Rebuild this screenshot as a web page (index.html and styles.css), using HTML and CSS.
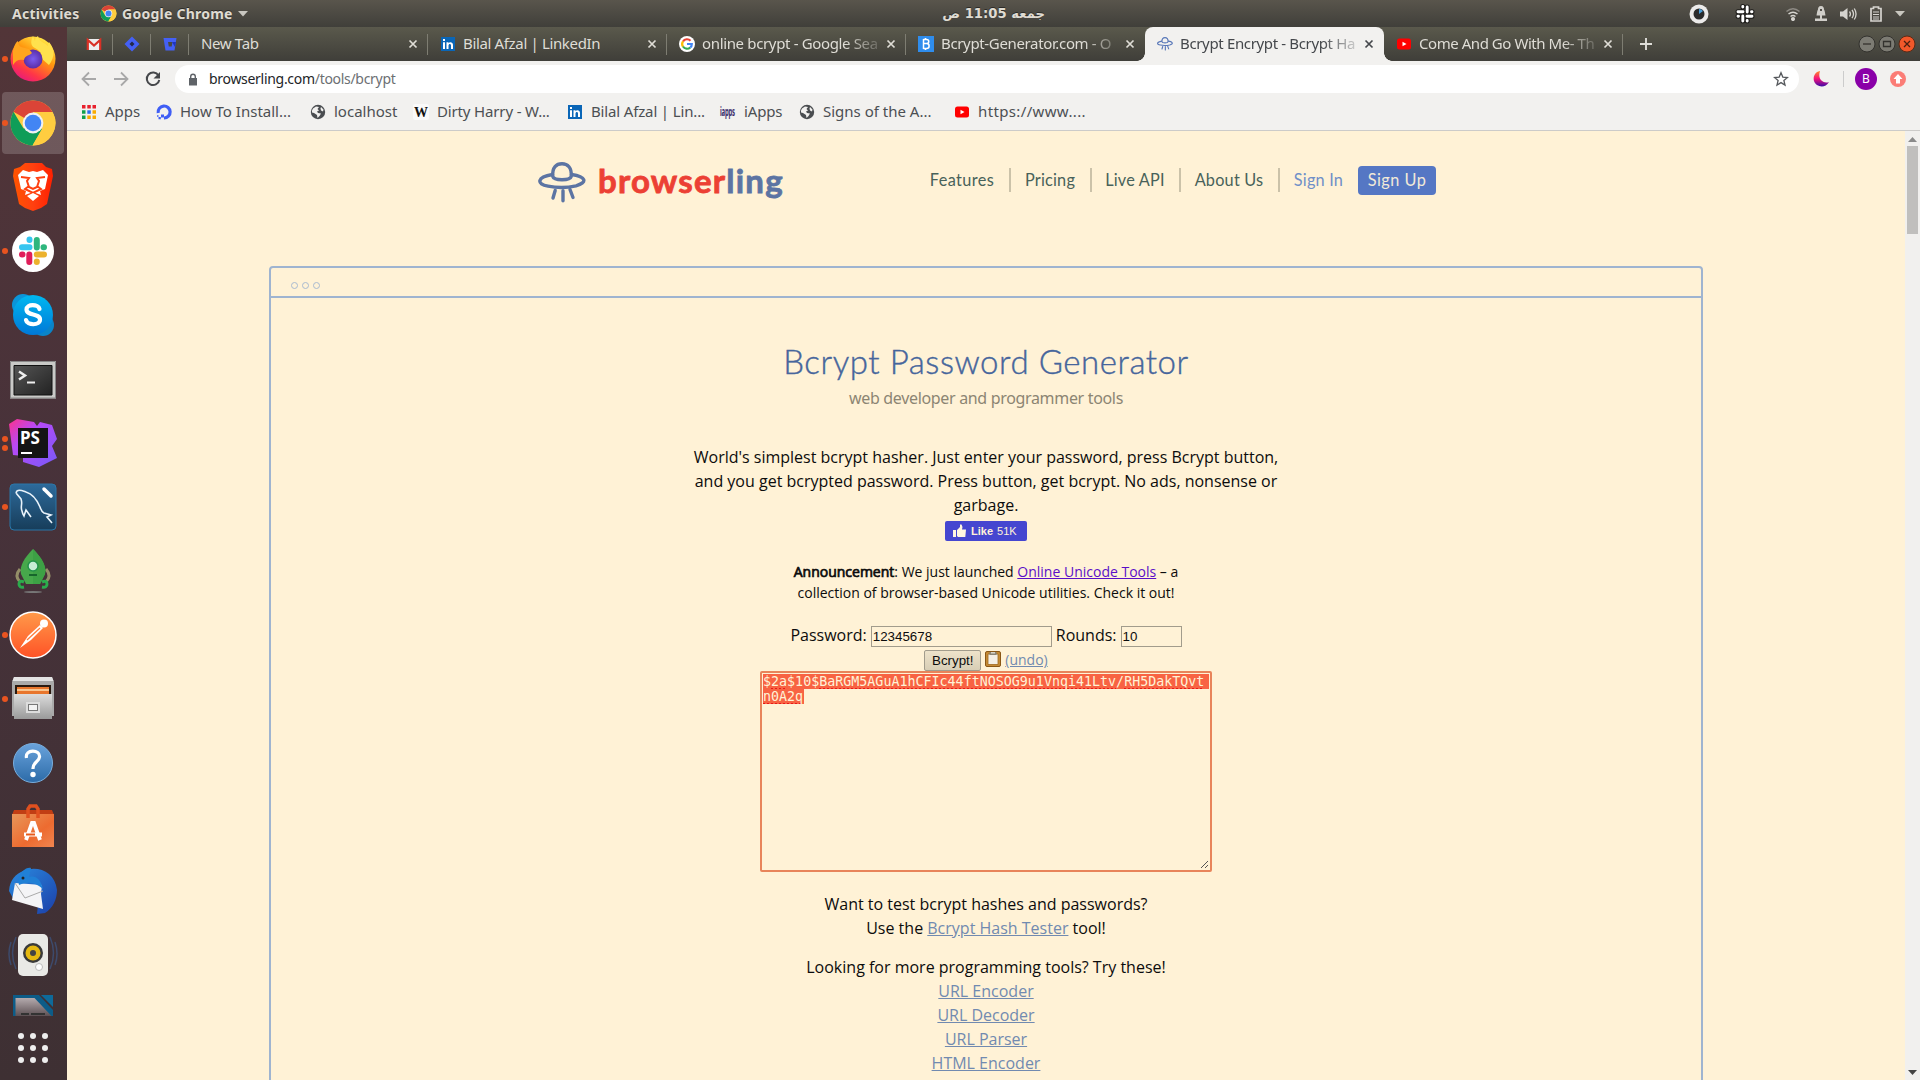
FILE: index.html
```html
<!DOCTYPE html>
<html lang="en">
<head>
<meta charset="utf-8">
<title>Bcrypt Encrypt - Bcrypt Hash Generator</title>
<link rel="stylesheet" href="styles.css">
</head>
<body>
<svg class="defs" width="0" height="0">
  <defs>
    <linearGradient id="gFox" x1="0.8" y1="0" x2="0.2" y2="1"><stop offset="0" stop-color="#fff44f"/><stop offset=".4" stop-color="#ff980e"/><stop offset=".75" stop-color="#ff3647"/><stop offset="1" stop-color="#e31587"/></linearGradient>
    <radialGradient id="gOrb"><stop offset="0" stop-color="#7a5cf0"/><stop offset="1" stop-color="#5b2ea6"/></radialGradient>
    <linearGradient id="gBrave" x1="0" x2="1"><stop offset="0" stop-color="#ff5500"/><stop offset=".5" stop-color="#ff4010"/><stop offset="1" stop-color="#ff2000"/></linearGradient>
    <linearGradient id="gSky" x1="0" y1="0" x2="0" y2="1"><stop offset="0" stop-color="#00b8f0"/><stop offset="1" stop-color="#0078d7"/></linearGradient>
    <linearGradient id="gTerm" x1="0" y1="0" x2="1" y2="1"><stop offset="0" stop-color="#555"/><stop offset="1" stop-color="#222"/></linearGradient>
    <linearGradient id="gPs" x1="0" y1="0" x2="1" y2="1"><stop offset="0" stop-color="#ff318c"/><stop offset=".35" stop-color="#b74af7"/><stop offset="1" stop-color="#765af8"/></linearGradient>
    <linearGradient id="gSql" x1="0" y1="0" x2="0" y2="1"><stop offset="0" stop-color="#2d6a9b"/><stop offset="1" stop-color="#173d5a"/></linearGradient>
    <linearGradient id="gPost" x1="0" y1="0" x2="0" y2="1"><stop offset="0" stop-color="#ff9a4a"/><stop offset="1" stop-color="#ff5226"/></linearGradient>
    <linearGradient id="gMetal" x1="0" y1="0" x2="0" y2="1"><stop offset="0" stop-color="#dcdcdc"/><stop offset="1" stop-color="#9a9a9a"/></linearGradient>
    <linearGradient id="gHelp" x1="0" y1="0" x2="0" y2="1"><stop offset="0" stop-color="#6aa3dc"/><stop offset="1" stop-color="#2c6ba8"/></linearGradient>
    <linearGradient id="gBag" x1="0" y1="0" x2="1" y2="1"><stop offset="0" stop-color="#e8975a"/><stop offset=".6" stop-color="#ed6b30"/><stop offset="1" stop-color="#f08550"/></linearGradient>
    <linearGradient id="gBird" x1="0" y1="0" x2="1" y2="1"><stop offset="0" stop-color="#2a8be0"/><stop offset="1" stop-color="#1c3fa8"/></linearGradient>
    <linearGradient id="gMoon" x1="0" y1="0" x2="0" y2="1"><stop offset="0" stop-color="#ff8a2a"/><stop offset=".5" stop-color="#f5127b"/><stop offset="1" stop-color="#3d0aa8"/></linearGradient>
    <linearGradient id="gCalc" x1="0" y1="0" x2="0" y2="1"><stop offset="0" stop-color="#b5abae"/><stop offset="1" stop-color="#5d5054"/></linearGradient>
    <symbol id="chrome" viewBox="0 0 48 48">
      <circle cx="24" cy="24" r="22.5" fill="#ffcd40"/>
      <path d="M24 24 4.5 12.8A22.5 22.5 0 0 1 43.5 13H24Z" fill="#db4437"/>
      <path d="M4.5 12.8A22.5 22.5 0 0 0 23.5 46.5L33 30 24 24 14.500 29.500Z" fill="#0f9d58"/>
      <path d="M33.500 29.500 23.500 46.500A22.500 22.500 0 0 0 43.500 13H24Z" fill="#ffcd40"/>
      <circle cx="24" cy="24" r="10.400" fill="#f1f1f1"/><circle cx="24" cy="24" r="8.300" fill="#4285f4"/>
    </symbol>
    <symbol id="globe" viewBox="0 0 16 16"><circle cx="8" cy="8" r="7.200" fill="#4a4d50"/><path d="M3 4.500 6 2.500 9 3 7.500 5 9 6.500 7 7.500 8 9 11 9.500 9.500 12 7.500 14 7 11 4 9 2 8.500 2 6.500ZM11 3l2.500 2.500-.5 2-2-1-.5-2Z" fill="#f2f1ef"/></symbol>
    <symbol id="linkedin" viewBox="0 0 16 16"><path d="M1 1h14v14H1z" fill="#0a66b7"/><path d="M3 6.200h2V13H3zM3 3h2v2H3zM6.500 6.200h2v1c1-1.700 4.500-1.500 4.500 1.600V13h-2V9.500c0-2.300-2.500-2-2.500 0V13h-2z" fill="#fff"/></symbol>
    <symbol id="youtube" viewBox="0 0 16 16"><rect x="1" y="2.500" width="14" height="11" rx="2.500" fill="#f00"/><path d="M6.500 5.700v4.600L10.500 8z" fill="#fff"/></symbol>
    <symbol id="ufo" viewBox="0 0 48 42"><g fill="none" stroke-width="3.400" stroke-linecap="round"><path d="M14.500 12.500C-1 15-2 22 10 24.200 19 26 30 25.800 38 23.800 50 20.500 48 14.500 33.500 12.500"/><path d="M14.800 14.500C14 5 18.500 1.800 24 1.800S34 5.500 33.200 14.500C32 18.800 16 18.800 14.800 14.500Z"/><path d="M17.200 28.500 15 36M25 28.800v10M32 27.500l3 8"/></g></symbol>
    <symbol id="x" viewBox="0 0 16 16"><path d="m4.500 4.500 7 7m0-7-7 7" fill="none" stroke="currentColor" stroke-width="1.700"/></symbol>
  </defs>
</svg>

<header class="panel">
  <span class="activities">Activities</span>
  <svg class="panel-chrome" width="17" height="17"><use href="#chrome"/></svg>
  <span class="appname">Google Chrome</span>
  <svg class="caret" width="10" height="6"><path d="M0 0h10L5 5.500z" fill="#c9c7c0"/></svg>
  <span class="clock" dir="rtl">جمعه 11:05 ص</span>
  <div class="tray">
    <svg width="20" height="20" viewBox="0 0 20 20"><circle cx="10" cy="10" r="9.500" fill="#ecebea"/><circle cx="10" cy="10" r="5.500" fill="#2b2b2b"/><path d="M10 10V5a5 5 0 0 1 4 2z" fill="#4a9ed8"/></svg>
    <svg width="20" height="20" viewBox="0 0 20 20"><path d="M7.800 2.500v.5M3 7.800h5M12.200 3v5M16.500 7.800h.5M12.200 16.500v.5M12 12.200h5M7.800 12v5M3 12.200h.5" stroke="#1d1c1a" stroke-width="5" stroke-linecap="round"/><path d="M7.800 2.500v.5M3 7.800h5M12.200 3v5M16.500 7.800h.5M12.200 16.500v.5M12 12.200h5M7.800 12v5M3 12.200h.5" stroke="#fff" stroke-width="2.900" stroke-linecap="round"/></svg>
    <svg width="14" height="14" viewBox="0 0 14 14" fill="none" stroke="#d6d4cf" stroke-width="1.500"><path d="M.5 4.500Q7-1 13.500 4.500" stroke="#8d8a84"/><path d="M2.500 7Q7 3.500 11.500 7M4.500 9.500Q7 7.500 9.500 9.500"/><circle cx="7" cy="12" r="1.300" fill="#d6d4cf"/></svg>
    <svg width="14" height="15" viewBox="0 0 14 15" fill="#d0cec9"><path d="M7 0c2.500 0 3 2 3 3.500C11 5 11 7 11.500 9.500h-9C3 7 3 5 4 3.500 4 2 4.500 0 7 0zM6 9h2v4H6zM1 12.500h12V15H1z"/><path d="M6 3h2v2H6z" fill="#504d47"/></svg>
    <svg width="17" height="14" viewBox="0 0 17 14"><path d="M0 4.500h3L7.500 1v12L3 9.500H0z" fill="#d6d4cf"/><path d="M9.500 4.500q1.800 2.500 0 5M12 2.800q3 4.200 0 8.400M14.300 1.500q3.500 5.500 0 11" fill="none" stroke="#d6d4cf" stroke-width="1.300"/></svg>
    <svg width="12" height="16" viewBox="0 0 12 16"><path d="M1 2.500h2.500V1h5v1.500H11v12.500H1z" fill="none" stroke="#d6d4cf" stroke-width="1.700"/><path d="M3 6h6M3 8.500h6M3 11h6M3 13h6" stroke="#d6d4cf" stroke-width="1.200"/></svg>
    <svg width="10" height="6"><path d="M0 0h10L5 5.500z" fill="#c9c7c0"/></svg>
  </div>
</header>

<div class="desktop">
  <nav class="dock">
    <div class="app run"><svg width="66" height="64"><circle cx="33" cy="32" r="22.500" fill="url(#gFox)"/><path d="M33 9c-3 6-2 10 2 12 6 3 7 7 7 11l7 6c6-8 6-16 0-23-1 2-1 3-1 4-4-4-9-4-10-10-2 1-3 3-3 5z" fill="#ffe14d"/><circle cx="33" cy="32" r="9.500" fill="url(#gOrb)"/><path d="M13 24c1-5 3-9 5-10 0 3 1 5 3 6l8 2 3 4c-3 3-7 2-8 7-5-1-8 0-11 5z" fill="#ffa51e"/></svg></div>
    <div class="app run focus"><svg width="48" height="48"><use href="#chrome"/></svg></div>
    <div class="app"><svg width="66" height="64" viewBox="0 0 66 64"><path d="M25 8h17l4 4 6 2 1 7-6 28-6 4-8 3-8-3-6-4-6-28 1-7 6-2z" fill="url(#gBrave)"/><path d="m18 20 5-5 6 2 4-1 4 1 6-2 5 5-3 14-5 2 1 4-8-3-8 3 1-4-5-2z" fill="#fff"/><path d="m21 22 8 1-2 3 2 6 4 2 4-2 2-6-2-3 8-1m-16 9-4 3 8 4 8-4-4-3" fill="none" stroke="#ff4010" stroke-width="2"/><path d="m27 41 6-3 6 3-6 5z" fill="#fff"/></svg></div>
    <div class="app run"><svg width="66" height="64"><circle cx="33" cy="32" r="21" fill="#fff"/><g stroke-width="6" stroke-linecap="round"><path d="M29.500 20.500v.5M22 28.300h7.500" stroke="#36c5f0"/><path d="M36.800 21v7.500M44 28.300h-.5" stroke="#2eb67d"/><path d="M29.300 35.500v7.500M22 35.500h.5" stroke="#e01e5a"/><path d="M36.800 35.500H44M36.800 42.500v.5" stroke="#ecb22e"/></g></svg></div>
    <div class="app"><svg width="66" height="64"><circle cx="23" cy="22" r="11" fill="#0b95d8"/><circle cx="43" cy="42" r="11" fill="#0a84c8"/><circle cx="33" cy="32" r="20" fill="url(#gSky)"/><path d="M39.500 26c-1-5-13-5.500-13 .5 0 6.500 13.500 3.500 13.500 10 0 6.500-13 6-14 .5" fill="none" stroke="#fff" stroke-width="4.200" stroke-linecap="round"/></svg></div>
    <div class="app"><svg width="66" height="64"><path d="M10 14h46v37.500H10z" fill="#c9c9c7"/><path d="M10.500 14.500h45v36.500h-45z" fill="none" stroke="#888"/><path d="M14 18.500h38v29.500H14z" fill="url(#gTerm)" stroke="#111"/><path d="m19 24.500 6 4-6 4" fill="none" stroke="#eee" stroke-width="2.500"/><path d="M27 35.500h8" stroke="#eee" stroke-width="2"/></svg></div>
    <div class="app run two"><svg width="66" height="64"><path d="m9 13 8-5 17 3 3 4 3-4 12 3 5 14-5 7 5 12-18 9-16-5v-6l-10-1z" fill="url(#gPs)"/><path d="M18 17h30v30H18z" fill="#141414"/><path d="M21 42h11" stroke="#fff" stroke-width="2"/><text x="20" y="33" class="ps">PS</text></svg></div>
    <div class="app run"><svg width="66" height="64"><rect x="10" y="9" width="46" height="46" rx="4" fill="url(#gSql)" stroke="#2b77a8"/><path d="M16 18c1-5 7-2 10-1 7 2 11 8 14 15 1 3 2 5 4 6l7 2-4 2 5 6M16 18l5 6c2 5-1 7 1 12 1 4 1 3 2 5l2-6 5 7" fill="none" stroke="#e8f2fa" stroke-width="1.600"/><path d="m44 14 7 7" stroke="#fff" stroke-width="3.500" stroke-linecap="round"/></svg></div>
    <div class="app"><svg width="66" height="64"><path d="M20 30q-6 7 0 13M46 30q6 7 0 13" fill="none" stroke="#948e68" stroke-width="3"/><path d="M33 10c8 8 14 17 12 25l-5 10H26l-5-10c-2-8 4-17 12-25z" fill="#47a84b"/><path d="M33 10c8 8 14 17 12 25l-5 10h-7z" fill="#3da145"/><path d="M24 43q-5-2-5 2t5 3M42 43q5-2 5 2t-5 3" fill="none" stroke="#2bab4c" stroke-width="3"/><circle cx="33" cy="27" r="5" fill="#c7ecd5" stroke="#23924a" stroke-width="1.500"/><path d="M29 36h8" stroke="#17652c" stroke-width="2"/><ellipse cx="33" cy="53" rx="9" ry="1" fill="#777"/></svg></div>
    <div class="app run"><svg width="66" height="64"><circle cx="33" cy="32" r="23" fill="url(#gPost)" stroke="#fff" stroke-width="1.500"/><circle cx="44" cy="20.500" r="4" fill="#fff"/><path d="m40 22 3 3-12 12-11 8 8-12z" fill="#fff"/><path d="m27 37 13-12" stroke="#ff7a3a" stroke-width="1.200"/></svg></div>
    <div class="app run"><svg width="66" height="64"><path d="M14 10h38l2 5v34H12V15z" fill="#aaa"/><path d="M14 10h38l1.500 4h-41z" fill="#e4e4e4"/><path d="M15 18h36v9H15z" fill="#2a1a10"/><path d="M17 20h32v7H17z" fill="#e8762d"/><path d="M17 23h32" stroke="#ffe0b0" stroke-width="1.500"/><path d="M14 27h38v25H14z" fill="url(#gMetal)"/><path d="M27 36h12v9H27z" fill="#777" stroke="#ddd" stroke-width="2"/><path d="M29 38h8v5h-8z" fill="#f2f2f2"/></svg></div>
    <div class="app"><svg width="66" height="64"><circle cx="33" cy="32" r="19.500" fill="url(#gHelp)" stroke="#79aedd"/><path d="M26.500 27c-2-9 14-9 13-1-.5 5-7 5-6.500 12" fill="none" stroke="#fff" stroke-width="3.200"/><circle cx="33" cy="43.500" r="2.700" fill="#fff"/></svg></div>
    <div class="app"><svg width="66" height="64"><path d="M14 15h38l2 5H12z" fill="#c13e14"/><path d="M12 19h42v33H12z" fill="url(#gBag)"/><path d="M28 23v-9l2-3h6l2 3v9" fill="none" stroke="#e0501f" stroke-width="3.500"/><path d="m26 45 6-17h2l6 17" fill="none" stroke="#fff" stroke-width="3.800"/><path d="M24 39.500h18" stroke="#fff" stroke-width="4"/><path d="M26 39.500h9" stroke="#e85a1a" stroke-width="2"/></svg></div>
    <div class="app"><svg width="66" height="64"><path d="M9 32c1-12 7-17 14-20 14-6 32 0 34 19 0 9-4 18-12 23l-8 1 1-9-24-5z" fill="url(#gBird)"/><path d="m15 24 27 2-1 9 2 15-31-9z" fill="#f4f4f6"/><path d="m15 24 10 15 18-7" fill="none" stroke="#aaa"/><path d="M18 21c2-8 8-13 13-12l-2 9c7-2 12 3 14 12-8-7-15-8-24-4z" fill="#2080d6"/><circle cx="23" cy="19" r="1.500" fill="#222"/></svg></div>
    <div class="app"><svg width="66" height="64"><path d="M16 14q-7 16 0 32M50 14q7 16 0 32M11 19q-4 12 0 23M55 19q4 12 0 23" fill="none" stroke="#3d4a6b" stroke-width="1.500"/><rect x="18" y="11" width="30" height="42" rx="5" fill="#e9e9e6"/><circle cx="33" cy="30" r="10" fill="#3a3a3a"/><circle cx="33" cy="30" r="7.500" fill="#e6b911"/><circle cx="33" cy="30" r="3" fill="#444"/><circle cx="39" cy="44" r="3.500" fill="#fff" stroke="#bbb"/></svg></div>
    <div class="app cut"><svg width="66" height="29"><path d="M13 8h26l14 15v6H13z" fill="#0c5c88"/><path d="M15.500 11h19l17 18h-36z" fill="url(#gCalc)"/><path d="M41 8h12v12z" fill="#0e6a9a"/><path d="M21 27h8m2 0h14" stroke="#333" stroke-width="2"/></svg></div>
    <div class="grid9"><svg width="34" height="32" fill="#eee"><circle cx="5" cy="4" r="3"/><circle cx="17" cy="4" r="3"/><circle cx="29" cy="4" r="3"/><circle cx="5" cy="16" r="3"/><circle cx="17" cy="16" r="3"/><circle cx="29" cy="16" r="3"/><circle cx="5" cy="28" r="3"/><circle cx="17" cy="28" r="3"/><circle cx="29" cy="28" r="3"/></svg></div>
  </nav>

  <div class="window">
    <div class="tabs">
      <div class="tab pin"><svg width="16" height="16"><path d="M1 3h14v11H1z" fill="#eee"/><path d="M1.800 14V4L8 9.500 14.200 4v10" fill="none" stroke="#d93025" stroke-width="2.200"/></svg></div>
      <div class="tab pin"><svg width="16" height="16"><path d="m8 .5 7.500 7.500L8 15.500.5 8z" fill="#4460f5"/><path d="m8 5.500 2.500 2.500L8 10.500 5.500 8z" fill="#23284a"/></svg></div>
      <div class="tab pin"><svg width="16" height="16"><path d="M1.500 2h13l-2 12.500h-9z" fill="#4460f5"/><path d="M6 6h4.500l-.8 4.500H6.800z" fill="#4a4a42"/><path d="m10 6h4l-1 5z" fill="#1f35c0"/></svg></div>
      <div class="tab"><span class="title">New Tab</span><svg class="close" width="16" height="16"><use href="#x"/></svg></div>
      <div class="tab"><svg width="16" height="16"><use href="#linkedin"/></svg><span class="title">Bilal Afzal | LinkedIn</span><svg class="close" width="16" height="16"><use href="#x"/></svg></div>
      <div class="tab"><svg width="16" height="16"><circle cx="8" cy="8" r="8" fill="#fff"/><g fill="none" stroke-width="2.200"><path d="M4 5.500A4.800 4.800 0 0 1 11.500 4.700" stroke="#ea4335"/><path d="M4 5.300a4.800 4.800 0 0 0 0 5.400" stroke="#fbbc05"/><path d="M4 10.500a4.800 4.800 0 0 0 7.300 1" stroke="#34a853"/><path d="M8 8h4.800c0 1.500-.5 2.700-1.500 3.500" stroke="#4285f4"/></g></svg><span class="title fade">online bcrypt - Google Sea</span><svg class="close" width="16" height="16"><use href="#x"/></svg></div>
      <div class="tab last"><svg width="16" height="16"><path d="M0 0h16v16H0z" fill="#2f8ded"/><path d="M5.500 3v10M5.500 3.500H8.500c3 0 3 4 0 4h-3m3 0c3.500 0 3.500 5 0 5h-3M7.500 2v1.500M7.500 12.500V14" fill="none" stroke="#fff" stroke-width="1.500"/></svg><span class="title fade">Bcrypt-Generator.com - O</span><svg class="close" width="16" height="16"><use href="#x"/></svg></div>
      <div class="tab active"><svg class="ufo-s" width="16" height="16"><use href="#ufo"/></svg><span class="title fade">Bcrypt Encrypt - Bcrypt Ha</span><svg class="close" width="16" height="16"><use href="#x"/></svg></div>
      <div class="tab"><svg width="16" height="16"><use href="#youtube"/></svg><span class="title fade tight">Come And Go With Me- Th</span><svg class="close" width="16" height="16"><use href="#x"/></svg></div>
      <svg class="plus" width="14" height="14"><path d="M7 1v12M1 7h12" stroke="#deddd8" stroke-width="1.900"/></svg>
      <div class="winbtns">
        <svg width="18" height="18"><circle cx="9" cy="9" r="8" fill="#7c7b73" stroke="#33322e"/><path d="M5 9h8" stroke="#33322e" stroke-width="1.300"/></svg>
        <svg width="18" height="18"><circle cx="9" cy="9" r="8" fill="#7c7b73" stroke="#33322e"/><path d="M5.500 6.500h7v5h-7z" fill="none" stroke="#33322e" stroke-width="1.300"/></svg>
        <svg width="18" height="18"><circle cx="9" cy="9" r="8" fill="#f1582a" stroke="#5a2a16"/><path d="m6 6 6 6m0-6-6 6" stroke="#4a2010" stroke-width="1.300"/></svg>
      </div>
    </div>

    <div class="toolbar">
      <svg width="16" height="16"><path d="M15 8H2m6-6.500L1.500 8 8 14.500" fill="none" stroke="#a8a8a8" stroke-width="1.800"/></svg>
      <svg width="16" height="16"><path d="M1 8h13M8 1.500 14.500 8 8 14.500" fill="none" stroke="#a8a8a8" stroke-width="1.800"/></svg>
      <svg width="16" height="16"><path d="M13.500 4.500A6.300 6.300 0 1 0 14.300 9" fill="none" stroke="#46484b" stroke-width="2"/><path d="M15 1v6.500H8.500z" fill="#46484b"/></svg>
      <div class="omnibox">
        <svg width="10" height="13"><path d="M1 5h8v7.500H1z" fill="#5f6368"/><path d="M2.700 5.500V3.500a2.300 2.300 0 0 1 4.600 0v2" fill="none" stroke="#5f6368" stroke-width="1.400"/></svg>
        <span class="url">browserling.com<span class="path">/tools/bcrypt</span></span>
        <svg class="star" width="16" height="16"><path d="m8 1.800 1.800 4.300 4.700.4-3.600 3 1.100 4.600L8 11.600 4 14.100l1.100-4.600-3.600-3 4.700-.4z" fill="none" stroke="#55585c" stroke-width="1.300"/></svg>
      </div>
      <div class="ext">
        <svg width="16" height="18"><path d="M7 1C1 2 0 8 1 11c2 6 11 8 15 1-5 2-12-2-9-11z" fill="url(#gMoon)"/></svg>
        <i class="vsep"></i>
        <span class="avatar">B</span>
        <svg width="16" height="16"><circle cx="8" cy="8" r="8" fill="#fb7d76"/><path d="m8 3 4.500 5H10v4.500H6V8H3.500z" fill="#fff"/></svg>
      </div>
    </div>

    <div class="bookmarks">
      <div class="bm"><svg width="16" height="16"><path d="M1 1h3.500v3.500H1zM6.300 1h3.500v3.500H6.300zM11.500 1H15v3.500h-3.500z" fill="#e8202c"/><path d="M1 6.300h3.500v3.500H1zM1 11.500h3.500V15H1z" fill="#12a04c"/><path d="M6.300 6.300h3.500v3.500H6.300z" fill="#2d6df0"/><path d="M11.500 6.300H15v3.500h-3.500zM6.300 11.500h3.500V15H6.300zM11.500 11.500H15V15h-3.500z" fill="#f9ab00"/></svg><span>Apps</span></div>
      <div class="bm"><svg width="16" height="16"><path d="M2.200 9A6 6 0 1 1 8 14" fill="none" stroke="#3f5ef5" stroke-width="3.200"/><path d="M5 10.500h3v3H5zM2.500 13h2.300v2.300H2.500zM1 11.300h1.500v1.500H1z" fill="#3f5ef5"/></svg><span>How To Install...</span></div>
      <div class="bm"><svg width="16" height="16"><use href="#globe"/></svg><span>localhost</span></div>
      <div class="bm snug"><svg width="16" height="16"><rect width="16" height="16" rx="2" fill="#fafafa"/><text x="1" y="13" class="wiki">W</text></svg><span>Dirty Harry - W...</span></div>
      <div class="bm snug"><svg width="16" height="16"><use href="#linkedin"/></svg><span>Bilal Afzal | Lin...</span></div>
      <div class="bm snug"><svg class="spill" width="16" height="16"><text x="0" y="12" class="iapps" transform="scale(.46 1)">iapps</text></svg><span>iApps</span></div>
      <div class="bm"><svg width="16" height="16"><use href="#globe"/></svg><span>Signs of the A...</span></div>
      <div class="bm loose"><svg width="16" height="16"><use href="#youtube"/></svg><span>https://www....</span></div>
    </div>

    <div class="viewport">
      <main class="page">
        <div class="site-head">
          <svg class="ufo-l" width="48" height="42"><use href="#ufo"/></svg>
          <span class="logo">browser<span class="ling">ling</span></span>
          <ul class="menu">
            <li>Features</li>
            <li>Pricing</li>
            <li>Live API</li>
            <li>About Us</li>
            <li class="signin">Sign In</li>
          </ul>
          <span class="signup">Sign Up</span>
        </div>
        <section class="frame">
          <div class="frame-bar"><i></i><i></i><i></i></div>
          <h1>Bcrypt Password Generator</h1>
          <p class="tagline">web developer and programmer tools</p>
          <p class="intro">World's simplest bcrypt hasher. Just enter your password, press Bcrypt button,<br>and you get bcrypted password. Press button, get bcrypt. No ads, nonsense or<br>garbage.</p>
          <div class="like"><svg width="13" height="14"><path d="M0 6h3v7H0zM4 6l3-3V.5h1.500L9.500 3 9 5.500h4l-.7 7.500H5l-1-1z" fill="#fff6e0"/></svg><b>Like</b> 51K</div>
          <p class="announce"><b>Announcement</b>: We just launched <a class="visited">Online Unicode Tools</a> – a<br>collection of browser-based Unicode utilities. Check it out!</p>
          <div class="form-row"><label>Password:</label><span class="field pw">12345678</span><label>Rounds:</label><span class="field rounds">10</span></div>
          <div class="form-row second"><span class="btn">Bcrypt!</span><svg width="16" height="16"><rect x=".5" y=".5" width="15" height="15" rx="1.500" fill="#c58a35" stroke="#8a5716"/><path d="M3 3h10v10.500H3z" fill="#f4efe6" stroke="#a06a20" stroke-width=".8"/><path d="M4.500 1h7v3h-7z" fill="#8b8577"/><path d="M6 1h4v1.500H6z" fill="#d8d4c8"/></svg><a class="undo">(undo)</a></div>
          <div class="result"><span class="line">$<u>2a</u>$10$<u>BaRGM5AGuA1hCFIc44ftNOSOG9u1Vnqi41Ltv</u>/<u>RH5DakTQvt</u></span><span class="line tail"><u>n0A2q</u></span><svg class="grip" width="9" height="9"><path d="M1 8 8 1M5 8l3-3" stroke="#555" stroke-width="1"/></svg></div>
          <p class="more">Want to test bcrypt hashes and passwords?<br>Use the <a>Bcrypt Hash Tester</a> tool!</p>
          <p class="links">Looking for more programming tools? Try these!<br><a>URL Encoder</a><br><a>URL Decoder</a><br><a>URL Parser</a><br><a>HTML Encoder</a></p>
        </section>
      </main>
      <div class="scrollbar"><svg width="9" height="5"><path d="M0 5h9L4.500 0z" fill="#8a8a8a"/></svg><i></i><svg class="down" width="9" height="5"><path d="M0 0h9L4.500 5z" fill="#444"/></svg></div>
    </div>
  </div>
</div>
</body>
</html>
```
FILE: styles.css
```css
* { box-sizing: border-box; }
body { margin: 0; width: 1920px; height: 1080px; overflow: hidden; font-family: "Noto Sans", sans-serif; background: #fff2d6; }
svg { display: block; flex: none; }
.defs { position: absolute; }

.panel { height: 27px; display: flex; align-items: center; padding-left: 12px; background: linear-gradient(#59554c, #403f3a); color: #dfdbd2; font-size: 14px; font-weight: 700; letter-spacing: .25px; white-space: nowrap; text-shadow: 0 -1px 0 #2c2b28; }
.activities { width: 88px; }
.panel-chrome { margin-right: 5px; }
.appname { width: 116px; }
.clock { width: 104px; margin: 0 auto 0 693px; line-height: 20px; font-family: "DejaVu Sans", sans-serif; font-size: 13.2px; letter-spacing: 0; }
.tray { display: flex; align-items: center; padding-right: 15px; }
.tray svg:nth-child(2) { margin-left: 26px; }
.tray svg:nth-child(3) { margin-left: 31px; }
.tray svg:nth-child(4) { margin-left: 14px; }
.tray svg:nth-child(5) { margin-left: 12px; }
.tray svg:nth-child(6) { margin-left: 13px; }
.tray svg:nth-child(7) { margin-left: 13px; }

.desktop { display: flex; height: 1053px; }
.dock { width: 67px; background: linear-gradient(#523538, #47323a 45%, #3e3033); display: flex; flex-direction: column; overflow: hidden; }
.app { height: 64px; flex: none; display: flex; align-items: center; justify-content: center; width: 66px; position: relative; }
.app.focus::after { content: ""; position: absolute; left: 2px; top: 1px; width: 62px; height: 62px; border-radius: 4px; background: rgba(255, 255, 255, .18); }
.app.focus svg { z-index: 1; }
.app.run::before { content: ""; position: absolute; left: 2px; top: 29px; width: 6px; height: 6px; border-radius: 3px; background: #e95420; z-index: 2; }
.app.two::before { top: 25px; box-shadow: 0 9px 0 #e95420; }
.app.cut { height: 29px; }
.grid9 { height: 64px; display: flex; justify-content: center; padding-top: 16px; width: 66px; }
.ps { font: 700 17px "Noto Sans", sans-serif; fill: #fff; }

.window { flex: 1; display: flex; flex-direction: column; background: #f2f1ef; min-width: 0; }
.tabs { height: 34px; display: flex; align-items: center; padding-left: 8px; background: linear-gradient(#5a594c, #3f3e39); color: #dfddd6; }
.tab { width: 239px; height: 34px; display: flex; align-items: center; padding: 0 7px 0 12px; position: relative; font-size: 15px; letter-spacing: -.35px; }
.tab::after { content: ""; position: absolute; right: 0; top: 7px; width: 1px; height: 21px; background: #7e7d72; }
.tab.last::after { display: none; }
.tab.pin { width: 38px; padding: 0 11px; }
.title { flex: 1; white-space: nowrap; overflow: hidden; margin: 0 3px 2px 7px; line-height: 22px; }
.tab > .title:first-child { margin-left: 0; }
.title.fade { -webkit-mask-image: linear-gradient(90deg, #000 80%, transparent 104%); mask-image: linear-gradient(90deg, #000 80%, transparent 104%); }
.title.tight { letter-spacing: -.45px; }
.tab.active { background: #f2f1ef; color: #45484c; border-radius: 8px 8px 0 0; }
.tab.active::before, .tab.active::after { content: ""; position: absolute; top: auto; bottom: 0; width: 8px; height: 8px; }
.tab.active::before { left: -8px; background: radial-gradient(circle at 0 0, transparent 7.500px, #f2f1ef 8px); }
.tab.active::after { right: -8px; background: radial-gradient(circle at 100% 0, transparent 7.500px, #f2f1ef 8px); }
.ufo-s { stroke: #5877b8; }
.ufo-l { stroke: #5c74a3; }
.plus { margin-left: 16px; }
.winbtns { display: flex; gap: 2px; margin-left: auto; margin-right: 4px; }

.toolbar { height: 36px; display: flex; align-items: center; padding-left: 14px; gap: 16px; }
.omnibox { width: 1624px; height: 28px; border-radius: 14px; background: #fff; display: flex; align-items: center; padding: 0 10px 0 13px; margin-left: -2px; }
.url { font-size: 14px; line-height: 20px; margin: 0 0 1px 11px; color: #222427; white-space: nowrap; letter-spacing: -.3px; }
.path { color: #6c6f73; }
.star { margin-left: auto; }
.ext { display: flex; align-items: center; margin-left: -2px; }
.vsep { width: 1px; height: 16px; background: #ccc; margin: 0 11px 0 14px; }
.avatar { width: 22px; height: 22px; border-radius: 11px; background: #8a00a8; color: #fff; font-size: 12px; line-height: 22px; text-align: center; margin-right: 13px; }

.bookmarks { height: 34px; border-bottom: 1px solid #cccbc9; display: grid; grid-template-columns: 75px 154px 103px 154px 153px 79px 155px 150px; align-items: center; padding: 0 0 4px 14px; font-size: 15px; color: #4c4f53; white-space: nowrap; line-height: 20px; }
.bm { display: flex; align-items: center; gap: 8px; }
.bm span { margin-bottom: 1px; }
.snug { letter-spacing: -.15px; }
.loose { letter-spacing: .36px; }
.spill { overflow: visible; }
.wiki { font: 700 14px "Liberation Serif", serif; fill: #111; }
.iapps { font: 700 13px "Noto Sans", sans-serif; fill: #3b2d6b; letter-spacing: -.5px; }

.viewport { flex: 1; display: flex; min-height: 0; background: #fff2d6; }
.page { flex: 1; overflow: hidden; font-family: "Open Sans", "Noto Sans", sans-serif; font-size: 16px; line-height: 24px; color: #0c0c0c; }
.page p { margin: 0; }
.page a { color: #718ab0; text-decoration: underline; }
.site-head { height: 135px; display: flex; padding: 31px 0 0 471px; font-family: Lato, sans-serif; }
.logo { font-size: 33px; line-height: 36px; width: 186px; margin-left: 12px; font-weight: 700; letter-spacing: 1.2px; color: #ec4034; white-space: nowrap; -webkit-text-stroke: .8px currentColor; }
.ling { color: #5c74a3; }
.menu { display: grid; grid-template-columns: 96px 81px 89px 99px 78px; list-style: none; margin: 6px 0 0 131px; padding: 0; height: 24px; color: #48625a; font-size: 16.3px; letter-spacing: .2px; }
.menu li { text-align: center; border-right: 2px solid #cbc2a9; line-height: 24px; white-space: nowrap; padding-right: 1px; }
.menu li:first-child { letter-spacing: .4px; padding: 0; }
.menu .signin { border: 0; color: #6f8fc8; }
.signup { height: 29px; width: 78px; margin-top: 4px; border-radius: 4px; background: #5577c4; color: #f3ead8; text-align: center; font-size: 16.3px; letter-spacing: .5px; line-height: 28px; white-space: nowrap; }

.frame { margin: 0 0 0 202px; width: 1434px; height: 900px; border: 2px solid #9fb4d0; border-radius: 4px; text-align: center; }
.frame-bar { height: 30px; border-bottom: 2px solid #9fb4d0; display: flex; gap: 4px; padding: 14px 0 0 20px; }
.frame-bar i { width: 7px; height: 7px; border: 1px solid #a9bad0; border-radius: 50%; }
h1 { margin: 42px 0 0; font: 300 33px/42px Lato, sans-serif; color: #46659c; letter-spacing: .56px; -webkit-text-stroke: .4px currentColor; }
.page .tagline { font-family: "Noto Sans", sans-serif; color: #8c8573; margin-top: 4px; letter-spacing: -.33px; }
.intro { padding-top: 35px; }
.like { width: 82px; height: 20px; margin: 4px auto 0; border-radius: 2px; background: #4546d0; color: #fff0d8; font: 11px/20px "Liberation Sans", sans-serif; display: flex; align-items: center; gap: 4px; padding-left: 8px; }
.like svg { margin-right: 1px; }
.announce { font-size: 14px; line-height: 21px; padding-top: 20px; }
.announce b { font-weight: 400; -webkit-text-stroke: .7px currentColor; }
.page .visited { color: #5a0fc8; }
.form-row { display: flex; justify-content: center; align-items: center; height: 24px; margin-top: 20px; gap: 4px; }
.form-row.second { margin-top: 0; }
.field { height: 21px; border: 1px solid #a29c8c; font: 13.33px/20px "Liberation Sans", sans-serif; text-align: left; padding-left: 1px; margin-top: 3px; }
.pw { width: 181px; }
.rounds { width: 61px; }
.btn { width: 57px; height: 21px; border: 1px solid #a29c8c; border-radius: 2px; background: linear-gradient(#eee3ca, #d8ceb6); font: 13.33px/20px "Liberation Sans", sans-serif; margin-top: 3px; }
.form-row .undo { font-size: 14px; margin-top: 2px; }
.result { width: 452px; height: 201px; margin: 0 auto; border: 2px solid #e8845a; border-radius: 2px; text-align: left; padding: 1px 1px 0 1px; font: 13.33px/15px "DejaVu Sans Mono", monospace; color: #fff2d6; position: relative; }
.line { display: block; height: 15px; background: #f86343; overflow: hidden; white-space: nowrap; }
.line u { text-decoration: underline dotted #e81818 1.5px; text-underline-offset: 2px; text-decoration-skip-ink: none; }
.tail { width: 41px; }
.grip { position: absolute; right: 1px; bottom: 1px; }
.more { padding-top: 20px; }
.links { padding-top: 15px; }

.scrollbar { width: 15px; background: #f1f0ee; display: flex; flex-direction: column; align-items: center; padding: 6px 0 5px; }
.scrollbar i { width: 11px; height: 88px; background: #c0bfbd; margin-top: 4px; }
.down { margin-top: auto; }
```
